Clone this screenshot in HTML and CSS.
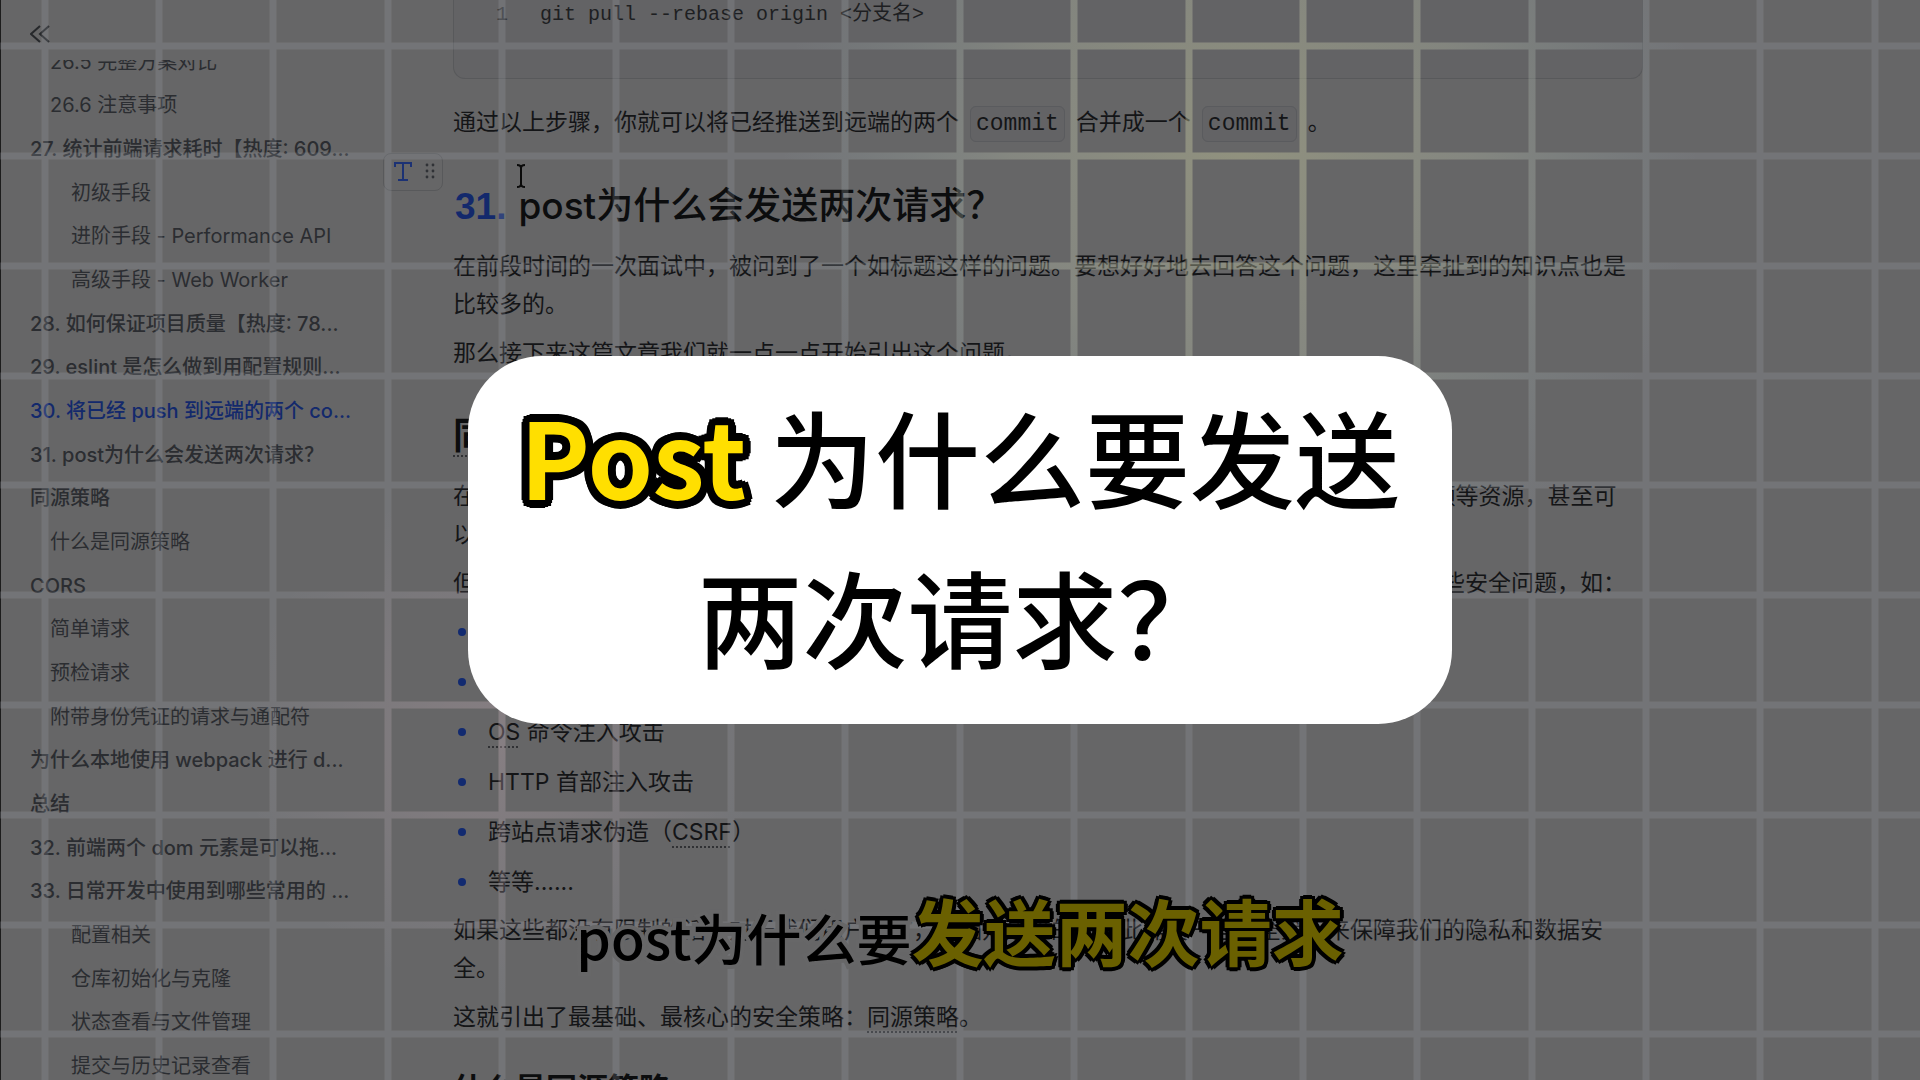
FILE: index.html
```html
<!DOCTYPE html>
<html lang="zh-CN">
<head>
    <meta charset="UTF-8">
    <meta name="viewport" content="width=device-width, initial-scale=1.0">
    <title>post为什么会发送两次请求？</title>

    <link rel="stylesheet" href="styles.css">
</head>
<body>
    <div class="page">
        <aside class="sidebar">
            <button class="collapse" type="button" aria-label="收起目录">
                <svg viewBox="0 0 20 18" width="20" height="18"><path d="M10 1 1 9l9 8M19 1l-9 8 9 8"/></svg>
            </button>
            <nav class="toc">
                <ul>
                    <li class="sub"><a href="#">26.5 完整方案对比</a></li>
                    <li class="sub"><a href="#">26.6 注意事项</a></li>
                    <li><a href="#">27. 统计前端请求耗时【热度: 609...</a></li>
                    <li class="deep"><a href="#">初级手段</a></li>
                    <li class="deep"><a href="#">进阶手段 - Performance API</a></li>
                    <li class="deep"><a href="#">高级手段 - Web Worker</a></li>
                    <li><a href="#">28. 如何保证项目质量【热度: 78...</a></li>
                    <li><a href="#">29. eslint 是怎么做到用配置规则...</a></li>
                    <li class="active"><a href="#">30. 将已经 push 到远端的两个 co...</a></li>
                    <li><a href="#post">31. post为什么会发送两次请求？</a></li>
                    <li><a href="#origin">同源策略</a></li>
                    <li class="sub"><a href="#what">什么是同源策略</a></li>
                    <li><a href="#">CORS</a></li>
                    <li class="sub"><a href="#">简单请求</a></li>
                    <li class="sub"><a href="#">预检请求</a></li>
                    <li class="sub"><a href="#">附带身份凭证的请求与通配符</a></li>
                    <li><a href="#">为什么本地使用 webpack 进行 d...</a></li>
                    <li><a href="#">总结</a></li>
                    <li><a href="#">32. 前端两个 dom 元素是可以拖...</a></li>
                    <li><a href="#">33. 日常开发中使用到哪些常用的 ...</a></li>
                    <li class="deep"><a href="#">配置相关</a></li>
                    <li class="deep"><a href="#">仓库初始化与克隆</a></li>
                    <li class="deep"><a href="#">状态查看与文件管理</a></li>
                    <li class="deep"><a href="#">提交与历史记录查看</a></li>
                </ul>
            </nav>
        </aside>

        <main class="article">
            <pre class="code"><span class="line-no">1</span><code>git pull --rebase origin &lt;分支名&gt;</code></pre>

            <p>通过以上步骤，你就可以将已经推送到远端的两个<code class="chip">commit</code>合并成一个<code class="chip">commit</code>。</p>

            <h1 id="post">
                <button class="handle" type="button" aria-label="标题">
                    <svg viewBox="0 0 60 36" width="60" height="36">
                        <path class="handle-t" d="M11 13V9h16v4M19 9v17M14 26h10"/>
                        <g class="handle-dots">
                            <circle cx="43" cy="11" r="1.4"/><circle cx="49" cy="11" r="1.4"/>
                            <circle cx="43" cy="17" r="1.4"/><circle cx="49" cy="17" r="1.4"/>
                            <circle cx="43" cy="23" r="1.4"/><circle cx="49" cy="23" r="1.4"/>
                        </g>
                    </svg>
                </button>
                <span class="no">31.</span>post为什么会发送两次请求？
                <svg class="cursor" viewBox="0 0 8 24" width="8" height="24"><path d="M0 1q4 0 4 3v16q0 3-4 3M8 1q-4 0-4 3M4 20q0 3 4 3"/></svg>
            </h1>
            <p>在前段时间的一次面试中，被问到了一个如标题这样的问题。要想好好地去回答这个问题，这里牵扯到的知识点也是比较多的。</p>
            <p>那么接下来这篇文章我们就一点一点开始引出这个问题。</p>

            <h2 id="origin"><span class="term">同源策略</span></h2>
            <p>在浏览器中，内容是很开放的，任何资源都可以接入其中，如 JavaScript 文件、图片、音频、视频等资源，甚至可以下载其他站点的可执行文件。</p>
            <p>但也不是说浏览器就是完全自由的，如果不加以控制，就会出现一些不可控的局面，例如会出现一些安全问题，如：</p>
            <ul>
                <li>跨站脚本攻击（XSS）</li>
                <li>SQL 注入攻击</li>
                <li><span class="term">OS</span> 命令注入攻击</li>
                <li>HTTP 首部注入攻击</li>
                <li>跨站点请求伪造（<span class="term">CSRF</span>）</li>
                <li>等等......</li>
            </ul>
            <p>如果这些都没有限制的话，对于我们用户而言，是相对危险的，因此需要一些安全策略来保障我们的隐私和数据安全。</p>
            <p>这就引出了最基础、最核心的安全策略：<span class="term">同源策略</span>。</p>
            <h3 id="what">什么是同源策略</h3>
        </main>
    </div>

    <!-- glowing grid over the page -->
    <svg class="grid" viewBox="0 0 1920 1080" preserveAspectRatio="none" aria-hidden="true">
        <defs>
            <radialGradient id="warm" gradientUnits="userSpaceOnUse" cx="1240" cy="150" r="460">
                <stop offset="0" stop-color="#dcdc90" stop-opacity=".28"/>
                <stop offset=".5" stop-color="#d4dcaa" stop-opacity=".18"/>
                <stop offset="1" stop-color="#a0d0c8" stop-opacity="0"/>
            </radialGradient>
            <radialGradient id="pink" gradientUnits="userSpaceOnUse" cx="500" cy="740" r="260">
                <stop offset="0" stop-color="#ffc0c8" stop-opacity=".14"/>
                <stop offset="1" stop-color="#ffc0c8" stop-opacity="0"/>
            </radialGradient>
            <path id="lines" d="M45 0V1080M159 0V1080M273 0V1080M388 0V1080M502 0V1080M616 0V1080M731 0V1080M845 0V1080M960 0V1080M1074 0V1080M1189 0V1080M1303 0V1080M1417 0V1080M1532 0V1080M1646 0V1080M1760 0V1080M1875 0V1080M0 46H1920M0 156H1920M0 266H1920M0 376H1920M0 485H1920M0 595H1920M0 705H1920M0 815H1920M0 925H1920M0 1034H1920"/>
        </defs>
        <use href="#lines" class="grid-base"/>
        <use href="#lines" class="grid-warm"/>
        <use href="#lines" class="grid-pink"/>
    </svg>

    <div class="subtitle">
        <span>post为什么要</span><strong>发送两次请求</strong>
    </div>

    <div class="overlay">
        <div class="card">
            <em>Post</em> 为什么要发送<br>两次请求？
        </div>
    </div>
</body>
</html>
```

FILE: styles.css
```css
* {
    box-sizing: border-box;
}

body {
    margin: 0;
    height: 100vh;
    overflow: hidden;
    position: relative;
    background: #666667;
    color: #141517;
    font-family: Inter, "Noto Sans CJK SC", sans-serif;
    font-size: 23px;
    line-height: 38px;
}

button {
    background: none;
    border: 0;
    padding: 0;
}

ul {
    list-style: none;
    margin: 0;
    padding: 0;
}

.page {
    display: flex;
    height: 100%;
    border-left: 1px solid #1c1c1c;
}

/* Sidebar */
.sidebar {
    display: flex;
    flex-direction: column;
    flex: 0 0 452px;
    padding-left: 29px;
}

.collapse {
    display: flex;
    align-items: flex-end;
    width: 20px;
    height: 60px;
    padding-bottom: 17px;
}

.collapse svg {
    flex: none;
    fill: none;
    stroke: #26282b;
    stroke-width: 2;
}

.toc {
    flex: 1;
    min-height: 0;
    overflow: hidden;
    font-size: 20px;
}

.toc ul {
    display: grid;
    grid-auto-rows: 1fr;
    align-items: center;
    height: calc(100% + 28px);
    margin-top: -20px;
}

.toc li {
    font-weight: 500;
    line-height: 30px;
    white-space: nowrap;
}

.toc a {
    color: #2b2d31;
    text-decoration: none;
}

.toc .sub,
.toc .deep {
    padding-left: 20px;
    font-weight: 400;
}

.toc .deep {
    padding-left: 41px;
}

.toc .active a {
    color: #13296c;
}

/* Article */
.article {
    flex: 0 1 1190px;
    min-width: 0;
}

.article p {
    max-width: 1180px;
    margin: 0 0 11px;
}

.article .code {
    display: flex;
    gap: 32px;
    height: 79px;
    margin: 0 0 24px;
    padding-left: 42px;
    background: rgba(88, 90, 96, 0.2);
    border: 1px solid #58595b;
    border-top: 0;
    border-radius: 0 0 12px 12px;
    font-family: "Liberation Mono", "Noto Sans CJK SC", monospace;
    font-size: 20px;
    line-height: 30px;
    color: #1e1f22;
}

.code code {
    font-family: inherit;
}

.line-no {
    color: #38393c;
}

.chip {
    margin: 0 11px;
    padding: 4px 5px;
    border: 1px solid #5a5b5e;
    border-radius: 6px;
    background: #636365;
    font-family: "Liberation Mono", monospace;
    font-size: 23px;
}

h1, h2, h3 {
    margin: 0;
    font-weight: 500;
    color: #0c0d0e;
}

h1 {
    position: relative;
    margin: 35px 0 12px;
    font-size: 37px;
    line-height: 56px;
}

.no {
    margin: 0 12px 0 2px;
    color: #13296c;
    font-family: "Liberation Sans", sans-serif;
    font-weight: 700;
}

.handle {
    position: absolute;
    left: -70px;
    top: -25px;
    width: 60px;
    height: 38px;
    border: 1px solid #58595b;
    border-radius: 8px;
}

.handle svg {
    display: block;
}

.handle-t {
    fill: none;
    stroke: #1c3274;
    stroke-width: 2;
}

.handle-dots {
    fill: #303236;
}

.cursor {
    position: absolute;
    left: 64px;
    top: -14px;
    fill: none;
    stroke: #0a0a0a;
    stroke-width: 2;
}

h2 {
    margin: 36px 0 13px;
    font-size: 37px;
    font-weight: 700;
    line-height: 56px;
}

h3 {
    margin-top: 29px;
    font-size: 31px;
    font-weight: 700;
    line-height: 48px;
}

.term {
    text-decoration: underline dotted #303134 2px;
    text-underline-offset: 6px;
}

.article ul {
    display: grid;
    gap: 12px;
    margin-bottom: 10px;
}

.article li {
    display: flex;
    align-items: center;
    white-space: pre;
}

.article li::before {
    content: "";
    width: 8px;
    height: 8px;
    margin: 0 22px 0 5px;
    border-radius: 50%;
    background: #122a70;
}

/* Grid lines */
.grid {
    position: absolute;
    inset: 0;
    width: 100%;
    height: 100%;
    fill: none;
    stroke-width: 7;
}

.grid-base {
    stroke: rgba(170, 176, 184, 0.2);
}

.grid-warm {
    stroke: url(#warm);
}

.grid-pink {
    stroke: url(#pink);
}

/* Subtitle */
.subtitle {
    position: absolute;
    left: 0;
    right: 0;
    bottom: 94px;
    display: flex;
    justify-content: center;
    align-items: baseline;
    font-family: "Noto Sans CJK SC", sans-serif;
    font-size: 55px;
    font-weight: 500;
    line-height: 100px;
    color: #000;
}

/* halo that hides the article text behind the letters */
.subtitle span {
    -webkit-text-stroke: 8px #676768;
    paint-order: stroke fill;
}

.subtitle strong {
    position: relative;
    font-size: 72px;
    font-weight: 700;
    color: #6a6000;
    text-shadow: 4px 0 #000, -4px 0 #000, 0 4px #000, 0 -4px #000,
        3px 3px #000, -3px 3px #000, 3px -3px #000, -3px -3px #000;
}

/* Title card */
.overlay {
    position: absolute;
    inset: 0;
    display: flex;
    justify-content: center;
    align-items: center;
}

.card {
    padding: 18px 52px 30px;
    border-radius: 74px;
    background: #fff;
    color: #000;
    font-family: "Noto Sans CJK SC", sans-serif;
    font-size: 105px;
    font-weight: 500;
    line-height: 160px;
    text-align: center;
    white-space: nowrap;
}

.card em {
    font-style: normal;
    font-weight: 700;
    color: #ffdf00;
    text-shadow: 8px 0 #000, -8px 0 #000, 0 8px #000, 0 -8px #000,
        7px 3px #000, -7px 3px #000, 7px -3px #000, -7px -3px #000,
        3px 7px #000, -3px 7px #000, 3px -7px #000, -3px -7px #000,
        6px 6px #000, -6px 6px #000, 6px -6px #000, -6px -6px #000,
        4px 0 #000, -4px 0 #000, 0 4px #000, 0 -4px #000;
}
```
